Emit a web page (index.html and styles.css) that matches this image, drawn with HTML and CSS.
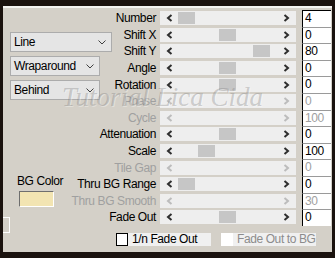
FILE: index.html
```html
<!DOCTYPE html>
<html lang="en">
  <head>
    <meta charset="UTF-8" />
    <title>Tile settings</title>
    <link rel="stylesheet" href="styles.css">
  </head>
  <body>
    <div class="panel">
      <div class="side">
        <div class="select wide">Line<svg width="8" height="5" viewBox="0 0 8 5"><polyline points="0.5,0.5 4,4 7.5,0.5" /></svg></div>
        <div class="select">Wraparound<svg width="8" height="5" viewBox="0 0 8 5"><polyline points="0.5,0.5 4,4 7.5,0.5" /></svg></div>
        <div class="select">Behind<svg width="8" height="5" viewBox="0 0 8 5"><polyline points="0.5,0.5 4,4 7.5,0.5" /></svg></div>
        <div class="bg-label">BG Color</div>
        <div class="swatch"></div>
        <div class="stub"></div>
      </div>

      <div class="rows">
        <div class="row">
          <span class="label">Number</span>
          <div class="slider"><svg class="arrow" viewBox="0 0 7 8"><polyline points="5.5,1 2,4 5.5,7" /></svg><span class="thumb" style="left:18px"></span><svg class="arrow" viewBox="0 0 7 8"><polyline points="1.5,1 5,4 1.5,7" /></svg></div>
          <div class="value">4</div>
        </div>
        <div class="row">
          <span class="label">Shift X</span>
          <div class="slider"><svg class="arrow" viewBox="0 0 7 8"><polyline points="5.5,1 2,4 5.5,7" /></svg><span class="thumb" style="left:59px"></span><svg class="arrow" viewBox="0 0 7 8"><polyline points="1.5,1 5,4 1.5,7" /></svg></div>
          <div class="value">0</div>
        </div>
        <div class="row">
          <span class="label">Shift Y</span>
          <div class="slider"><svg class="arrow" viewBox="0 0 7 8"><polyline points="5.5,1 2,4 5.5,7" /></svg><span class="thumb" style="left:93px"></span><svg class="arrow" viewBox="0 0 7 8"><polyline points="1.5,1 5,4 1.5,7" /></svg></div>
          <div class="value">80</div>
        </div>
        <div class="row">
          <span class="label">Angle</span>
          <div class="slider"><svg class="arrow" viewBox="0 0 7 8"><polyline points="5.5,1 2,4 5.5,7" /></svg><span class="thumb" style="left:59px"></span><svg class="arrow" viewBox="0 0 7 8"><polyline points="1.5,1 5,4 1.5,7" /></svg></div>
          <div class="value">0</div>
        </div>
        <div class="row">
          <span class="label">Rotation</span>
          <div class="slider"><svg class="arrow" viewBox="0 0 7 8"><polyline points="5.5,1 2,4 5.5,7" /></svg><span class="thumb" style="left:59px"></span><svg class="arrow" viewBox="0 0 7 8"><polyline points="1.5,1 5,4 1.5,7" /></svg></div>
          <div class="value">0</div>
        </div>
        <div class="row disabled">
          <span class="label">Phase</span>
          <div class="slider"><svg class="arrow" viewBox="0 0 7 8"><polyline points="5.5,1 2,4 5.5,7" /></svg><svg class="arrow" viewBox="0 0 7 8"><polyline points="1.5,1 5,4 1.5,7" /></svg></div>
          <div class="value">0</div>
        </div>
        <div class="row disabled">
          <span class="label">Cycle</span>
          <div class="slider"><svg class="arrow" viewBox="0 0 7 8"><polyline points="5.5,1 2,4 5.5,7" /></svg><svg class="arrow" viewBox="0 0 7 8"><polyline points="1.5,1 5,4 1.5,7" /></svg></div>
          <div class="value">100</div>
        </div>
        <div class="row">
          <span class="label">Attenuation</span>
          <div class="slider"><svg class="arrow" viewBox="0 0 7 8"><polyline points="5.5,1 2,4 5.5,7" /></svg><span class="thumb" style="left:59px"></span><svg class="arrow" viewBox="0 0 7 8"><polyline points="1.5,1 5,4 1.5,7" /></svg></div>
          <div class="value">0</div>
        </div>
        <div class="row">
          <span class="label">Scale</span>
          <div class="slider"><svg class="arrow" viewBox="0 0 7 8"><polyline points="5.5,1 2,4 5.5,7" /></svg><span class="thumb" style="left:38px"></span><svg class="arrow" viewBox="0 0 7 8"><polyline points="1.5,1 5,4 1.5,7" /></svg></div>
          <div class="value">100</div>
        </div>
        <div class="row disabled">
          <span class="label">Tile Gap</span>
          <div class="slider"><svg class="arrow" viewBox="0 0 7 8"><polyline points="5.5,1 2,4 5.5,7" /></svg><svg class="arrow" viewBox="0 0 7 8"><polyline points="1.5,1 5,4 1.5,7" /></svg></div>
          <div class="value">0</div>
        </div>
        <div class="row">
          <span class="label">Thru BG Range</span>
          <div class="slider"><svg class="arrow" viewBox="0 0 7 8"><polyline points="5.5,1 2,4 5.5,7" /></svg><span class="thumb" style="left:18px"></span><svg class="arrow" viewBox="0 0 7 8"><polyline points="1.5,1 5,4 1.5,7" /></svg></div>
          <div class="value">0</div>
        </div>
        <div class="row disabled">
          <span class="label">Thru BG Smooth</span>
          <div class="slider"><svg class="arrow" viewBox="0 0 7 8"><polyline points="5.5,1 2,4 5.5,7" /></svg><svg class="arrow" viewBox="0 0 7 8"><polyline points="1.5,1 5,4 1.5,7" /></svg></div>
          <div class="value">30</div>
        </div>
        <div class="row">
          <span class="label">Fade Out</span>
          <div class="slider"><svg class="arrow" viewBox="0 0 7 8"><polyline points="5.5,1 2,4 5.5,7" /></svg><span class="thumb" style="left:59px"></span><svg class="arrow" viewBox="0 0 7 8"><polyline points="1.5,1 5,4 1.5,7" /></svg></div>
          <div class="value">0</div>
        </div>

        <div class="checks">
          <span class="box"></span><span class="check-label">1/n Fade Out</span>
          <span class="box off"></span><span class="check-label off">Fade Out to BG</span>
        </div>
      </div>

      <div class="watermark">Tutorial Lica Cida</div>
    </div>
  </body>
</html>
```

FILE: styles.css
```css
body {
  margin: 0;
  height: 258px;
  overflow: hidden;
  background-color: #1a120e;
  font-family: "Liberation Sans", Arial, sans-serif;
  font-size: 12px;
  letter-spacing: -0.4px;
  color: #000;
}

.panel {
  position: relative;
  display: grid;
  grid-template-areas: "main";
  height: 246px;
  margin: 6px 3px 4px 3px;
  padding-top: 2px;
  background-color: #d4d0c8;
  border-top: 2px solid #f4f3f0;
  box-sizing: border-box;
  overflow: hidden;
}

.side,
.rows {
  grid-area: main;
}

/* left column */
.side {
  display: flex;
  flex-direction: column;
  align-items: flex-start;
  padding-left: 7px;
}

.select {
  display: flex;
  align-items: center;
  justify-content: space-between;
  width: 90px;
  height: 20px;
  margin-top: 4px;
  padding: 0 5px 0 3px;
  background-color: #e5e5e5;
  border: 1px solid #acacac;
  box-sizing: border-box;
}

.select.wide {
  width: 102px;
  margin-top: 22px;
}

.select svg polyline {
  fill: none;
  stroke: #404040;
  stroke-width: 1;
}

.bg-label {
  margin: 74px 0 0 7px;
  line-height: 14px;
}

.swatch {
  width: 35px;
  height: 16px;
  margin: 3px 0 0 9px;
  background-color: #f2e4b2;
  border-top: 1px solid #6e6e6e;
  border-left: 1px solid #6e6e6e;
  border-right: 1px solid #fff;
  border-bottom: 1px solid #fff;
  box-sizing: border-box;
}

.stub {
  width: 7px;
  height: 16px;
  margin: 10px 0 0 -7px;
  border: 1px solid #fff;
  border-left: none;
  box-sizing: border-box;
}

/* slider rows */
.rows {
  display: flex;
  flex-direction: column;
}

.row {
  display: grid;
  grid-template-columns: 154px 139px 35px;
  align-items: center;
  height: 16.6px;
}

.label {
  text-align: right;
  padding-right: 1px;
  white-space: nowrap;
}

.slider {
  position: relative;
  display: flex;
  align-items: center;
  justify-content: space-between;
  width: 136px;
  height: 14px;
  margin-left: 3px;
  padding: 0 6px;
  background-color: #eeeeee;
  box-sizing: border-box;
}

.arrow {
  width: 7px;
  height: 8px;
}

.arrow polyline {
  fill: none;
  stroke: #2e2e2e;
  stroke-width: 2;
}

.thumb {
  position: absolute;
  top: 1px;
  width: 17px;
  height: 12px;
  background-color: #c6c6c6;
}

.value {
  align-self: stretch;
  width: 29px;
  margin-left: 6px;
  padding-left: 2px;
  background-color: #fff;
  border-left: 1px solid #000;
  border-top: 1px solid #9a9a9a;
  line-height: 15px;
  box-sizing: border-box;
}

.row:first-child .value {
  border-top-color: #000;
}

.disabled .label,
.disabled .value {
  color: #a0a0a0;
}

.disabled .arrow polyline {
  stroke: #bcbcbc;
}

/* check boxes */
.checks {
  display: flex;
  height: 13px;
  margin-top: 7px;
  padding-left: 113px;
}

.box {
  width: 12px;
  height: 13px;
  background-color: #fff;
  border: 1px solid #000;
  box-sizing: border-box;
}

.box.off {
  margin-left: 10px;
  border: none;
}

.check-label {
  width: 83px;
  padding-left: 4px;
  background-color: #f0f0f0;
  line-height: 13px;
  box-sizing: border-box;
}

.check-label.off {
  color: #8c8c8c;
}

.watermark {
  position: absolute;
  left: 59px;
  top: 74px;
  font-family: "Liberation Serif", serif;
  font-style: italic;
  font-size: 27px;
  letter-spacing: 0;
  color: rgba(110, 110, 110, 0.3);
  text-shadow: 1px 1px 0 rgba(255, 255, 255, 0.35);
  white-space: nowrap;
  pointer-events: none;
}
```
